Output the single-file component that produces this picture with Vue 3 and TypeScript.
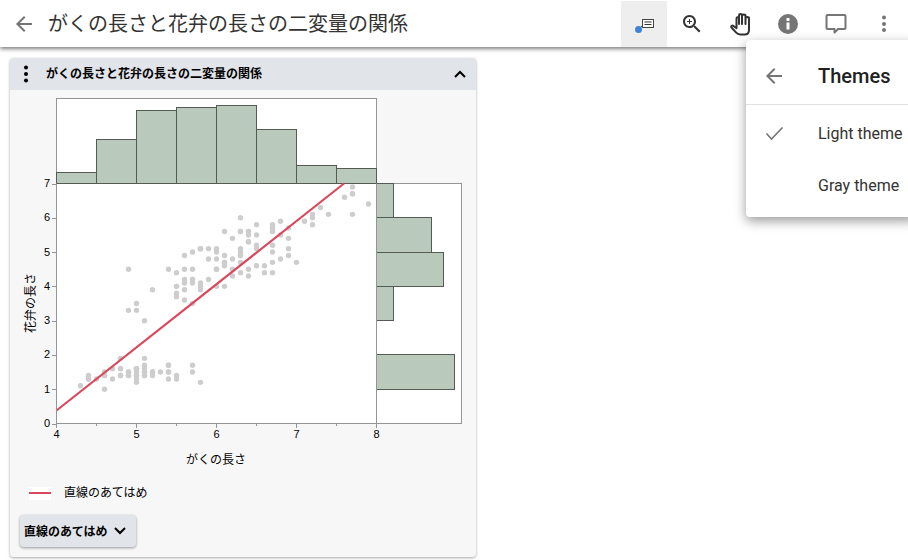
<script setup lang="ts">
const title = 'がくの長さと花弁の長さの二変量の関係';

const sepal = [
  5.1, 4.9, 4.7, 4.6, 5.0, 5.4, 4.6, 5.0, 4.4, 4.9, 5.4, 4.8, 4.8, 4.3, 5.8, 5.7, 5.4, 5.1, 5.7, 5.1, 5.4, 5.1, 4.6, 5.1, 4.8,
  5.0, 5.0, 5.2, 5.2, 4.7, 4.8, 5.4, 5.2, 5.5, 4.9, 5.0, 5.5, 4.9, 4.4, 5.1, 5.0, 4.5, 4.4, 5.0, 5.1, 4.8, 5.1, 4.6, 5.3, 5.0,
  7.0, 6.4, 6.9, 5.5, 6.5, 5.7, 6.3, 4.9, 6.6, 5.2, 5.0, 5.9, 6.0, 6.1, 5.6, 6.7, 5.6, 5.8, 6.2, 5.6, 5.9, 6.1, 6.3, 6.1, 6.4,
  6.6, 6.8, 6.7, 6.0, 5.7, 5.5, 5.5, 5.8, 6.0, 5.4, 6.0, 6.7, 6.3, 5.6, 5.5, 5.5, 6.1, 5.8, 5.0, 5.6, 5.7, 5.7, 6.2, 5.1, 5.7,
  6.3, 5.8, 7.1, 6.3, 6.5, 7.6, 4.9, 7.3, 6.7, 7.2, 6.5, 6.4, 6.8, 5.7, 5.8, 6.4, 6.5, 7.7, 7.7, 6.0, 6.9, 5.6, 7.7, 6.3, 6.7,
  7.2, 6.2, 6.1, 6.4, 7.2, 7.4, 7.9, 6.4, 6.3, 6.1, 7.7, 6.3, 6.4, 6.0, 6.9, 6.7, 6.9, 5.8, 6.8, 6.7, 6.7, 6.3, 6.5, 6.2, 5.9,
];
const petal = [
  1.4, 1.4, 1.3, 1.5, 1.4, 1.7, 1.4, 1.5, 1.4, 1.5, 1.5, 1.6, 1.4, 1.1, 1.2, 1.5, 1.3, 1.4, 1.7, 1.5, 1.7, 1.5, 1.0, 1.7, 1.9,
  1.6, 1.6, 1.5, 1.4, 1.6, 1.6, 1.5, 1.5, 1.4, 1.5, 1.2, 1.3, 1.4, 1.3, 1.5, 1.3, 1.3, 1.3, 1.6, 1.9, 1.4, 1.6, 1.4, 1.5, 1.4,
  4.7, 4.5, 4.9, 4.0, 4.6, 4.5, 4.7, 3.3, 4.6, 3.9, 3.5, 4.2, 4.0, 4.7, 3.6, 4.4, 4.5, 4.1, 4.5, 3.9, 4.8, 4.0, 4.9, 4.7, 4.3,
  4.4, 4.8, 5.0, 4.5, 3.5, 3.8, 3.7, 3.9, 5.1, 4.5, 4.5, 4.7, 4.4, 4.1, 4.0, 4.4, 4.6, 4.0, 3.3, 4.2, 4.2, 4.2, 4.3, 3.0, 4.1,
  6.0, 5.1, 5.9, 5.6, 5.8, 6.6, 4.5, 6.3, 5.8, 6.1, 5.1, 5.3, 5.5, 5.0, 5.1, 5.3, 5.5, 6.7, 6.9, 5.0, 5.7, 4.9, 6.7, 4.9, 5.7,
  6.0, 4.8, 4.9, 5.6, 5.8, 6.1, 6.4, 5.6, 5.1, 5.6, 6.1, 5.6, 5.5, 4.8, 5.4, 5.6, 5.1, 5.1, 5.9, 5.7, 5.2, 5.0, 5.2, 5.4, 5.1,
];

// chart coordinates are page pixels, the svg viewBox starts at the card body's corner
const px = (v: number) => 56.5 + (v - 4) * 80;
const py = (v: number) => 423.5 - v * (240 / 7);

const points = sepal
  .map((s, i) => ({ cx: px(s), cy: py(petal[i]) }))
  .filter((p) => p.cy > 183.5);

const topBars = [172.5, 139.5, 110.5, 107.5, 105.5, 129.5, 165.5, 168.5].map((top, i) => ({
  x: 56.5 + i * 40, y: top, h: 183.5 - top,
}));

const sideBars = [
  { y: 183.5, h: 34, w: 17 },
  { y: 217.5, h: 35, w: 55 },
  { y: 252.5, h: 34, w: 67 },
  { y: 286.5, h: 34, w: 17 },
  { y: 354.5, h: 35, w: 78 },
];

const yTicks = [0, 1, 2, 3, 4, 5, 6, 7];
const xTicks = [4, 5, 6, 7, 8];
const xMinor = [4.5, 5.5, 6.5, 7.5];
</script>

<template>
  <div class="page">
    <header class="topbar">
      <button class="icon-btn" aria-label="戻る">
        <svg width="24" height="24" viewBox="0 0 24 24"><path fill="#757575" d="M20 11H7.83l5.59-5.59L12 4l-8 8 8 8 1.41-1.41L7.83 13H20v-2z" /></svg>
      </button>
      <h1>{{ title }}</h1>
      <div class="tools">
        <button class="icon-btn active" aria-label="annotate">
          <svg width="24" height="24" viewBox="0 0 24 24">
            <path d="M6 17.5 10 14" stroke="#555" stroke-width="1" />
            <circle cx="6.5" cy="17.5" r="3.5" fill="#3f83d8" />
            <rect x="10.5" y="7.5" width="11" height="8" fill="#fff" stroke="#444" />
            <path d="M12.5 10h7M12.5 12.5h7" stroke="#333" stroke-width="1" />
          </svg>
        </button>
        <button class="icon-btn" aria-label="zoom">
          <svg width="24" height="24" viewBox="0 0 24 24">
            <path fill="#333" d="M15.5 14h-.79l-.28-.27C15.41 12.59 16 11.11 16 9.5 16 5.91 13.09 3 9.5 3S3 5.91 3 9.5 5.91 16 9.5 16c1.61 0 3.09-.59 4.23-1.57l.27.28v.79l5 4.99L20.49 19l-4.99-5zm-6 0C7.01 14 5 11.99 5 9.5S7.01 5 9.5 5 14 7.01 14 9.5 11.99 14 9.5 14z" />
            <path fill="#333" d="M12 10h-2v2H9v-2H7V9h2V7h1v2h2v1z" />
          </svg>
        </button>
        <button class="icon-btn" aria-label="pan">
          <svg width="24" height="24" viewBox="0 0 24 24">
            <path fill="none" stroke="#333" stroke-width="2" stroke-linejoin="round" stroke-linecap="round" d="M21 7v11c0 3-2 4.500-4.500 4.500h-4.500c-1.800 0-2.800-.7-3.800-1.800L3.500 15.500c-1-1.200.6-2.500 2-1.500l3 2.200V6.500c0-1.800 2.500-1.800 2.500 0V12M11 12V3.500c0-1.900 3-1.900 3 0V12M14 12V4c0-1.900 3.500-1.900 3.500 0v8M17.500 12V6.500c0-1.900 3.500-1.900 3.500 0" />
          </svg>
        </button>
        <button class="icon-btn" aria-label="info">
          <svg width="24" height="24" viewBox="0 0 24 24">
            <circle cx="12" cy="12" r="10" fill="#757575" />
            <path fill="#fff" d="M10.500 10.500h3v7h-3zM10.500 6h3v3h-3z" />
          </svg>
        </button>
        <button class="icon-btn" aria-label="comment">
          <svg width="24" height="24" viewBox="0 0 24 24">
            <path fill="none" stroke="#757575" stroke-width="2" stroke-linejoin="round" d="M3.500 3h17a1 1 0 0 1 1 1v12a1 1 0 0 1-1 1H14l-3.500 3.500V17H3.500a1 1 0 0 1-1-1V4a1 1 0 0 1 1-1z" />
          </svg>
        </button>
        <button class="icon-btn" aria-label="more">
          <svg width="24" height="24" viewBox="0 0 24 24">
            <circle cx="12" cy="5.500" r="2" fill="#757575" />
            <circle cx="12" cy="12" r="2" fill="#757575" />
            <circle cx="12" cy="18" r="2" fill="#757575" />
          </svg>
        </button>
      </div>
    </header>

    <section class="card">
      <div class="card-head">
        <svg class="kebab" width="8" height="18" viewBox="0 0 8 18">
          <circle cx="4" cy="2.500" r="2" />
          <circle cx="4" cy="9" r="2" />
          <circle cx="4" cy="15.500" r="2" />
        </svg>
        <h2>{{ title }}</h2>
        <svg class="collapse" width="12" height="8" viewBox="0 0 12 8">
          <path d="M1 7l5-5 5 5" fill="none" stroke="#000" stroke-width="2" />
        </svg>
      </div>

      <svg class="chart" width="466" height="380" viewBox="10 90 466 380">
        <rect x="56.500" y="98.500" width="320" height="85" fill="#fff" stroke="#939598" />
        <rect x="376.500" y="183.500" width="85" height="240" fill="#fff" stroke="#939598" />
        <rect x="56.500" y="183.500" width="320" height="240" fill="#fff" stroke="#939598" />

        <rect v-for="b in topBars" :key="b.x" class="bar" :x="b.x" :y="b.y" width="40" :height="b.h" />
        <rect v-for="b in sideBars" :key="b.y" class="bar" x="376.500" :y="b.y" :width="b.w" :height="b.h" />

        <circle v-for="(p, i) in points" :key="i" :cx="p.cx" :cy="p.cy" r="2.700" fill="#cdcdcd" />
        <line x1="56.500" y1="410.500" x2="344" y2="183.500" stroke="#d9485c" stroke-width="2.200" />

        <path d="M56.500 183.500V423.500H461.500" fill="none" stroke="#939598" />
        <path d="M376.500 183.500V423.500" fill="none" stroke="#939598" />

        <g v-for="v in yTicks" :key="'y' + v">
          <line x1="52" :y1="Math.round(py(v)) + 0.5" x2="56" :y2="Math.round(py(v)) + 0.5" stroke="#939598" />
          <text class="tick" x="50" :y="py(v) + 3.500" text-anchor="end">{{ v }}</text>
        </g>
        <g v-for="v in xTicks" :key="'x' + v">
          <line :x1="px(v)" y1="423.500" :x2="px(v)" y2="428" stroke="#939598" />
          <text class="tick" :x="px(v)" y="438" text-anchor="middle">{{ v }}</text>
        </g>
        <line v-for="v in xMinor" :key="'m' + v" :x1="px(v)" y1="423.500" :x2="px(v)" y2="426" stroke="#939598" />

        <text class="axis-label" x="216" y="464" text-anchor="middle">がくの長さ</text>
        <text class="axis-label" transform="translate(35 303) rotate(-90)" text-anchor="middle">花弁の長さ</text>
      </svg>

      <div class="legend">
        <span class="swatch"><i /></span>
        <span>直線のあてはめ</span>
      </div>

      <button class="fit-btn">
        <span>直線のあてはめ</span>
        <svg width="12" height="8" viewBox="0 0 12 8"><path d="M1 1l5 5 5-5" fill="none" stroke="#000" stroke-width="2" /></svg>
      </button>
    </section>

    <aside class="menu">
      <div class="menu-head">
        <svg width="24" height="24" viewBox="0 0 24 24"><path fill="#757575" d="M20 11H7.830l5.590-5.590L12 4l-8 8 8 8 1.410-1.410L7.830 13H20v-2z" /></svg>
        <span>Themes</span>
      </div>
      <div class="menu-list">
        <div class="menu-row">
          <svg width="24" height="24" viewBox="0 0 24 24"><path d="M4.500 12.500 9.500 18 20.500 6.500" fill="none" stroke="#757575" stroke-width="1.600" /></svg>
          <span>Light theme</span>
        </div>
        <div class="menu-row">
          <svg width="24" height="24" viewBox="0 0 24 24" />
          <span>Gray theme</span>
        </div>
      </div>
    </aside>
  </div>
</template>

<style>
html, body { background: #fff; overflow: hidden; }
</style>

<style scoped>
.page { position: relative; width: 908px; height: 560px; overflow: hidden; font-family: Roboto, "Noto Sans CJK JP", sans-serif; color: #212121; }
button { border: 0; padding: 0; background: none; font: inherit; cursor: pointer; }

.topbar { position: relative; display: flex; align-items: center; height: 47px; background: #fff; box-shadow: 0 2px 4px rgba(0, 0, 0, .5); }
.topbar h1 { flex: 1; margin: 2px 0 0; font-size: 20px; font-weight: 400; line-height: 47px; color: #333; white-space: nowrap; }
.tools { display: flex; }
.icon-btn { display: flex; align-items: center; justify-content: center; width: 48px; height: 47px; }
.icon-btn.active { width: 46px; height: 46px; margin: 1px 1px 0; background: #eee; }

.card { width: 466px; height: 499px; margin: 11px 0 0 10px; border-radius: 4px; background: #f7f7f7; box-shadow: 0 1px 3px rgba(0, 0, 0, .35); overflow: hidden; }
.card-head { display: flex; align-items: center; height: 32px; background: #e1e4e8; }
.kebab { margin-left: 12px; fill: #000; }
.card-head h2 { flex: 1; margin: 0 0 4px 16px; font-size: 12px; font-weight: 700; color: #000; }
.collapse { margin-right: 10px; }
.chart { display: block; }
.bar { fill: #b9c9bb; stroke: #545b52; }
.tick { font-family: "Liberation Sans", sans-serif; font-size: 11px; fill: #000; }
.axis-label { font-size: 12px; fill: #000; }

.legend { display: flex; align-items: center; gap: 13px; margin: 14px 0 0 19px; font-size: 12px; line-height: 18px; color: #000; }
.swatch { display: flex; align-items: center; width: 22px; height: 13px; background: #fff; }
.swatch i { display: block; width: 100%; height: 2px; background: #d9485c; }

.fit-btn { display: flex; align-items: center; gap: 6px; width: 116px; height: 32px; margin: 13px 0 0 10px; padding-left: 4px; border-radius: 4px; background: #e1e4e8; box-shadow: 0 1px 3px rgba(0, 0, 0, .4); font-size: 12px; font-weight: 700; color: #000; white-space: nowrap; }
.fit-btn span { margin-bottom: 2px; }

.menu { position: absolute; top: 40px; left: 746px; width: 170px; height: 177px; border-radius: 4px; background: #fff; box-shadow: 0 4px 12px rgba(0, 0, 0, .4); }
.menu-head { box-sizing: border-box; display: flex; align-items: center; gap: 32px; height: 65px; padding: 8px 0 0 16px; border-bottom: 1px solid #e0e0e0; font-size: 20px; font-weight: 500; color: #212121; }
.menu-list { padding-top: 2px; }
.menu-row { display: flex; align-items: center; gap: 32px; height: 52px; padding-left: 16px; font-size: 16px; color: #333; white-space: nowrap; }
</style>
